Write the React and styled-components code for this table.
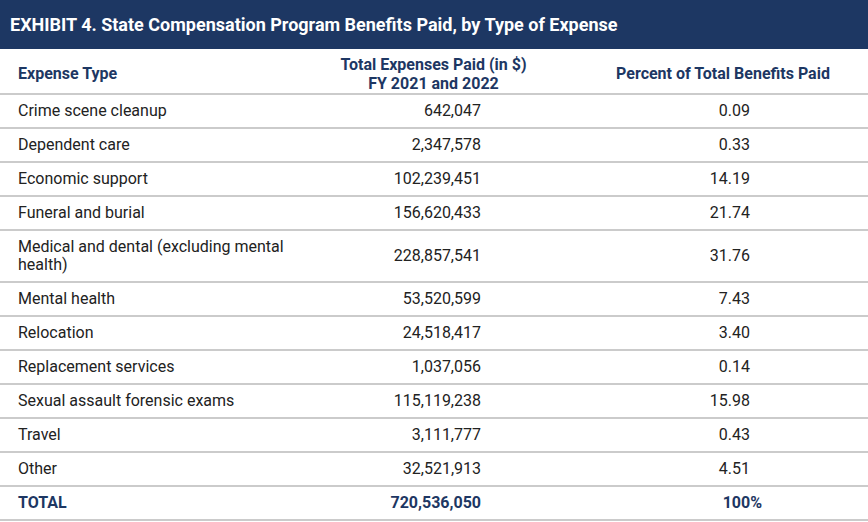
import React from "react";
import styled, {createGlobalStyle} from "styled-components";

const Global = createGlobalStyle`
  html, body {
    margin: 0;
    padding: 0;
    background: #fff;
  }
  body {
    font-family: Roboto, "Liberation Sans", Arial, sans-serif;
  }
`

const NAVY = '#1d3763'

const Page = styled.div`
  width: 868px;
  background: #fff;
`
const Title = styled.div`
  height: 49px;
  background: ${NAVY};
  color: #fff;
  font-size: 18px;
  font-weight: 700;
  display: flex;
  align-items: center;
  padding-left: 10px;
  box-sizing: border-box;
`
const Row = styled.div`
  display: grid;
  grid-template-columns: 289px 289px 290px;
  border-bottom: 2px solid #cbcbcb;
`
const HeadCell = styled.div`
  padding: 5px 0 0;
  min-height: 39px;
  display: flex;
  align-items: center;
  justify-content: ${p => p.$left ? 'flex-start' : 'center'};
  padding-left: ${p => p.$left ? '18px' : '0'};
  text-align: center;
  font-size: 16px;
  line-height: 19px;
  font-weight: 700;
  color: ${NAVY};
`
const Cell = styled.div`
  padding: 7px ${p => p.$pad || 4}px 7px ${p => p.$left ? 18 : 0}px;
  display: flex;
  align-items: center;
  justify-content: ${p => p.$left ? 'flex-start' : 'flex-end'};
  text-align: ${p => p.$left ? 'left' : 'right'};
  font-size: 16px;
  line-height: 18px;
  color: ${p => p.$total ? NAVY : '#222'};
  font-weight: ${p => p.$total ? 700 : 400};
`

const rows = [
  ['Crime scene cleanup', '642,047', '0.09'],
  ['Dependent care', '2,347,578', '0.33'],
  ['Economic support', '102,239,451', '14.19'],
  ['Funeral and burial', '156,620,433', '21.74'],
  ['Medical and dental (excluding mental health)', '228,857,541', '31.76'],
  ['Mental health', '53,520,599', '7.43'],
  ['Relocation', '24,518,417', '3.40'],
  ['Replacement services', '1,037,056', '0.14'],
  ['Sexual assault forensic exams', '115,119,238', '15.98'],
  ['Travel', '3,111,777', '0.43'],
  ['Other', '32,521,913', '4.51'],
]

export default function App() {
  return (
    <Page>
      <Global/>
      <Title>EXHIBIT 4. State Compensation Program Benefits Paid, by Type of Expense</Title>
      <Row>
        <HeadCell $left>Expense Type</HeadCell>
        <HeadCell>Total Expenses Paid (in $)<br/>FY 2021 and 2022</HeadCell>
        <HeadCell>Percent of Total Benefits Paid</HeadCell>
      </Row>
      {rows.map(([type, paid, pct]) => (
        <Row key={type}>
          <Cell $left>{type}</Cell>
          <Cell $pad={97}>{paid}</Cell>
          <Cell $pad={118}>{pct}</Cell>
        </Row>
      ))}
      <Row>
        <Cell $left $total>TOTAL</Cell>
        <Cell $pad={97} $total>720,536,050</Cell>
        <Cell $pad={106} $total>100%</Cell>
      </Row>
    </Page>
  )
}
